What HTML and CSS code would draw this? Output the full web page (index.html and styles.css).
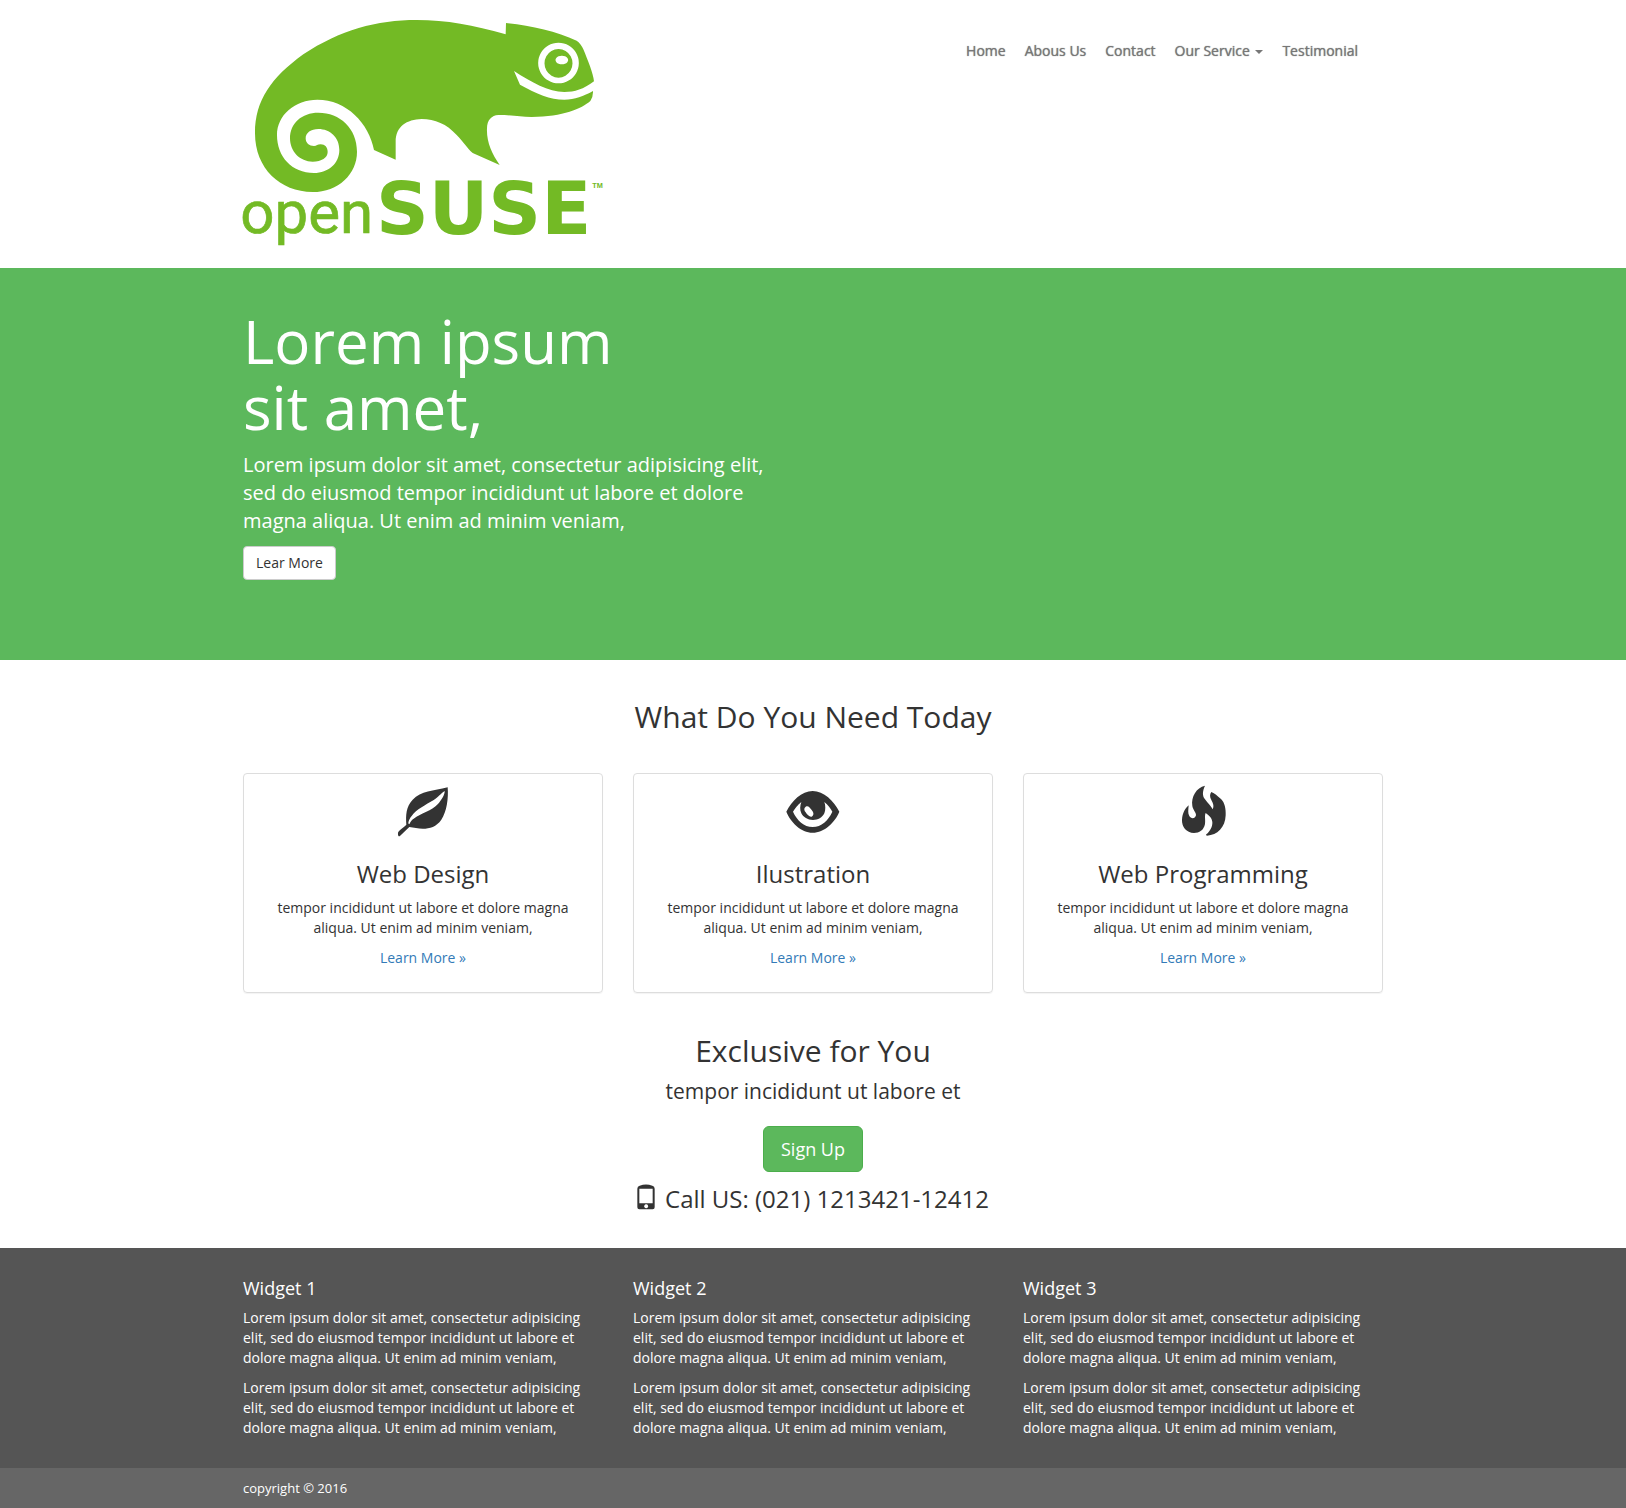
FILE: index.html
```html
<!DOCTYPE html>
<html lang="en">
<head>
<meta charset="utf-8">
<meta name="viewport" content="width=device-width, initial-scale=1">
<title>openSUSE</title>
<link rel="stylesheet" href="styles.css">
</head>
<body>
<header class="container site-header">
  <a class="brand" href="#" aria-label="openSUSE">
    <svg class="logo" viewBox="39 60 1080 684">
      <path fill-rule="evenodd" d="M828 69C900 76 980 94 1040 122Q1052 130 1060 148C1073 180 1090 220 1092 244C1060 268 1035 276 1003 276C955 276 905 247 852 213L870 254C920 281 960 299 1003 299C1035 299 1060 289 1089 273Q1090 290 1081 303C1055 326 1000 350 905 351C870 351 850 345 805 345C785 346 771 360 771 385C769 425 785 460 809 495L728 459C712 445 700 425 680 405C650 372 615 357 575 357C530 358 497 380 497 425V479L432 450C417 370 350 299 262 299C195 299 141 345 141 405C141 470 185 519 252 519C295 519 328 490 328 450C328 412 300 387 265 387C243 387 227 398 227 415C227 430 238 438 252 438C260 438 262 433 272 433C285 433 293 442 293 456C293 473 275 485 248 485C210 485 180 455 180 415C180 370 215 338 265 338C330 338 381 385 381 455C381 522 325 576 248 576C150 576 75 505 75 400C75 300 125 232 220 163C330 90 440 60 560 60C650 60 730 75 827 103ZM985 128a61 61 0 1 0 1 0ZM986 147a42 43 0 1 1-1 0ZM995 167a19 13 0 1 0 1 0Z"/>
      <text class="logo-open" x="31" y="700">open</text>
      <text class="logo-suse" x="438" y="701">SUSE</text>
      <text class="logo-tm" x="1087" y="563">TM</text>
    </svg>
  </a>
  <nav class="nav">
    <a href="#">Home</a>
    <a href="#">Abous Us</a>
    <a href="#">Contact</a>
    <a href="#">Our Service <span class="caret"></span></a>
    <a href="#">Testimonial</a>
  </nav>
</header>

<section class="hero">
  <div class="container">
    <div class="hero-copy">
      <h1>Lorem ipsum<br>sit amet,</h1>
      <p>Lorem ipsum dolor sit amet, consectetur adipisicing elit, sed do eiusmod tempor incididunt ut labore et dolore magna aliqua. Ut enim ad minim veniam,</p>
      <button class="btn btn-default" type="button">Lear More</button>
    </div>
  </div>
</section>

<main class="container">
  <h2 class="services-title">What Do You Need Today</h2>
  <div class="columns">
    <article class="card">
      <svg class="card-icon" viewBox="495 279 168 168"><path fill-rule="evenodd" d="M653 292C656 325 650 366 634 389C610 424 570 417 538 411L509 439Q503 440 504 428C507 420 522 412 529 404C527 375 528 350 548 329C573 303 610 303 653 292ZM644 303C632 311 626 320 610 331C585 346 560 358 545 378C536 389 533 400 537 403C541 400 540 394 550 387C575 368 605 363 623 343C635 330 645 312 644 303Z"/></svg>
      <h3>Web Design</h3>
      <p>tempor incididunt ut labore et dolore magna aliqua. Ut enim ad minim veniam,</p>
      <p><a href="#">Learn More »</a></p>
    </article>
    <article class="card">
      <svg class="card-icon" viewBox="75 39 168 168"><path fill-rule="evenodd" d="M79 125C95 93 125 63 158 63S222 93 238 125C225 157 193 188 158 188S92 157 79 125ZM124 96C113 105 105 115 99 125C111 151 132 171 158 171S205 151 217 125C212 115 204 105 193 96C197 107 197 120 193 130C187 143 174 150 159 150C143 150 130 142 124 130C119 119 120 107 124 96ZM137 110C131 114 132 121 137 127C142 135 149 142 155 140C163 135 161 127 155 120C150 113 144 105 137 110Z"/></svg>
      <h3>Ilustration</h3>
      <p>tempor incididunt ut labore et dolore magna aliqua. Ut enim ad minim veniam,</p>
      <p><a href="#">Learn More »</a></p>
    </article>
    <article class="card">
      <svg class="card-icon" viewBox="75 39 168 168"><path d="M165 47C157 64 157 78 165 88C173 99 184 109 188 118C193 108 189 99 184 90C179 81 179 72 184 66C195 70 201 78 213 87C224 97 228 117 227 136C226 172 202 196 171 197Q166 196 169 193C180 184 188 170 187 156C186 144 178 137 167 129C163 136 167 150 165 162C161 181 148 189 132 189C109 188 95 170 96 149C97 129 106 115 116 106C115 119 113 131 118 138C123 147 135 147 138 136C139 127 129 121 127 108C123 80 139 53 165 47Z"/></svg>
      <h3>Web Programming</h3>
      <p>tempor incididunt ut labore et dolore magna aliqua. Ut enim ad minim veniam,</p>
      <p><a href="#">Learn More »</a></p>
    </article>
  </div>
  <section class="signup">
    <h2>Exclusive for You</h2>
    <p class="lead">tempor incididunt ut labore et</p>
    <button class="btn btn-success" type="button">Sign Up</button>
    <p class="phone"><svg class="phone-icon" viewBox="0 0 54 78"><path fill-rule="evenodd" d="M8 5Q27-2 46 5Q53 7 53 14V70Q53 76 47 76H7Q1 76 1 70V14Q1 7 8 5ZM7 14V58H47V14ZM27 61a6 6 0 1 0 1 0Z"/></svg>Call US: (021) 1213421-12412</p>
  </section>
</main>

<footer>
  <div class="widgets">
    <div class="container columns">
      <section>
        <h4>Widget 1</h4>
        <p>Lorem ipsum dolor sit amet, consectetur adipisicing elit, sed do eiusmod tempor incididunt ut labore et dolore magna aliqua. Ut enim ad minim veniam,</p>
        <p>Lorem ipsum dolor sit amet, consectetur adipisicing elit, sed do eiusmod tempor incididunt ut labore et dolore magna aliqua. Ut enim ad minim veniam,</p>
      </section>
      <section>
        <h4>Widget 2</h4>
        <p>Lorem ipsum dolor sit amet, consectetur adipisicing elit, sed do eiusmod tempor incididunt ut labore et dolore magna aliqua. Ut enim ad minim veniam,</p>
        <p>Lorem ipsum dolor sit amet, consectetur adipisicing elit, sed do eiusmod tempor incididunt ut labore et dolore magna aliqua. Ut enim ad minim veniam,</p>
      </section>
      <section>
        <h4>Widget 3</h4>
        <p>Lorem ipsum dolor sit amet, consectetur adipisicing elit, sed do eiusmod tempor incididunt ut labore et dolore magna aliqua. Ut enim ad minim veniam,</p>
        <p>Lorem ipsum dolor sit amet, consectetur adipisicing elit, sed do eiusmod tempor incididunt ut labore et dolore magna aliqua. Ut enim ad minim veniam,</p>
      </section>
    </div>
  </div>
  <div class="copyright">
    <div class="container">copyright © 2016</div>
  </div>
</footer>
</body>
</html>
```
FILE: styles.css
```css
* {
  box-sizing: border-box;
}

body {
  margin: 0;
  background: #fff;
  color: #333;
  font: 14px/20px "Open Sans", sans-serif;
}

h1, h2, h3, h4, p {
  margin: 0 0 10px;
  font-weight: 400;
}

h2 {
  font-size: 30px;
  line-height: 33px;
}

h3 {
  margin: 22px 0 11px;
  font-size: 24px;
  line-height: 26px;
}

h4 {
  font-size: 18px;
  line-height: 20px;
}

a {
  color: #337ab7;
  text-decoration: none;
}

.container {
  max-width: 1170px;
  margin: 0 auto;
  padding: 0 15px;
}

.columns {
  display: grid;
  grid-template-columns: repeat(auto-fit, minmax(260px, 1fr));
  column-gap: 30px;
}

.site-header {
  display: flex;
  flex-wrap: wrap;
  justify-content: space-between;
  align-items: flex-start;
  padding-top: 20px;
  padding-bottom: 20px;
}

.brand {
  display: block;
  width: 360px;
  max-width: 100%;
}

.logo {
  display: block;
  width: 100%;
  overflow: visible;
  fill: #73ba25;
}

.logo-open {
  font: 400 180px Roboto, sans-serif;
  stroke: #73ba25;
  stroke-width: 2px;
}

.logo-suse {
  font: 700 220px "DejaVu Sans", sans-serif;
}

.logo-tm {
  font: 700 22px "Liberation Sans", sans-serif;
}

.nav {
  display: flex;
  flex-wrap: wrap;
  gap: 19px;
  padding: 21px 25px 0 0;
}

.nav a {
  color: #777;
  text-shadow: 0 0 1px #777;
}

.caret {
  display: inline-block;
  margin-left: 2px;
  border: 4px solid transparent;
  border-top-color: currentColor;
  border-bottom: 0;
  vertical-align: middle;
}

.hero {
  padding: 40px 0 80px;
  background: #5cb85c;
  color: #fff;
}

.hero-copy {
  max-width: 555px;
}

.hero h1 {
  margin-bottom: 11px;
  font-size: 60px;
  line-height: 66px;
}

.hero p {
  margin-bottom: 11px;
  font-size: 20px;
  line-height: 28px;
}

.btn {
  display: block;
  border: 1px solid;
  font-family: inherit;
  cursor: pointer;
}

.btn-default {
  padding: 6px 12px;
  border-color: #ccc;
  border-radius: 4px;
  background: #fff;
  color: #333;
  font-size: 14px;
  line-height: 20px;
}

.btn-success {
  margin: 0 auto 10px;
  padding: 10px 17px;
  border-color: #4cae4c;
  border-radius: 6px;
  background: #5cb85c;
  color: #fff;
  font-size: 18px;
  line-height: 24px;
}

.services-title {
  margin: 40px 0;
  text-align: center;
}

.card {
  padding: 9px 15px 14px;
  border: 1px solid #ddd;
  border-radius: 4px;
  box-shadow: 0 1px 1px rgba(0, 0, 0, 0.05);
  text-align: center;
}

.card-icon {
  display: block;
  width: 56px;
  height: 56px;
  margin: 0 auto;
  fill: #333;
}

.signup {
  padding: 41px 0 22px;
  text-align: center;
}

.signup .lead {
  margin-bottom: 20px;
  font-size: 21px;
  line-height: 29px;
}

.phone {
  font-size: 24px;
  line-height: 34px;
}

.phone-icon {
  width: 18px;
  height: 26px;
  margin-right: 10px;
  fill: #333;
  vertical-align: -2px;
}

.widgets {
  padding: 30px 0 20px;
  background: #555;
  color: #fff;
}

.copyright {
  padding: 10px 0;
  background: #666;
  color: #fff;
  font-size: 13px;
}
```
